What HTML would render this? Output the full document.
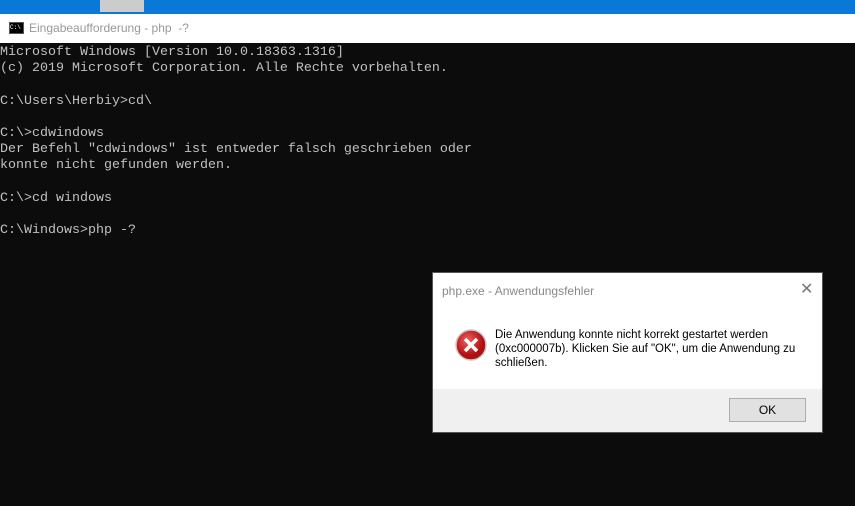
<!DOCTYPE html><html><head><style>
body{margin:0;width:855px;height:506px;overflow:hidden;background:#0c0c0c;position:relative;font-family:"Liberation Sans",sans-serif}
#top{position:absolute;left:0;top:0;width:855px;height:14px;background:#0a78d7}
#tb{position:absolute;left:0;top:14px;width:855px;height:29px;background:#fff}
#tb .t{position:absolute;left:29px;top:7px;font-size:12px;color:#999}
#ico{position:absolute;left:9px;top:22px;width:13px;height:10px;background:#000;border:1px solid #555;color:#fff;font-size:6px;line-height:10px;font-family:"Liberation Mono",monospace}
pre{position:absolute;left:0;top:45px;margin:0;font-family:"Liberation Mono",monospace;font-size:13.33px;line-height:16.2px;color:#c0c0c0}
#dlg{position:absolute;left:432px;top:272px;width:389px;height:159px;background:#fff;border:1px solid #555}
#dlg .tt{position:absolute;left:9px;top:11px;font-size:12px;color:#888}
#dlg .x{position:absolute;left:367px;top:6px;font-size:16px;color:#777}
#dlg .msg{position:absolute;left:62px;top:55px;font-size:11.5px;line-height:14px;color:#000;width:320px}
#dlg .bot{position:absolute;left:0;top:116px;width:389px;height:43px;background:#f0f0f0}
#dlg .ok{position:absolute;left:296px;top:9px;width:75px;height:22px;border:1px solid #adadad;background:#e1e1e1;font-size:12px;text-align:center;line-height:22px}
</style></head><body>
<div id="top"><div style="position:absolute;left:100px;top:0;width:44px;height:12px;background:#ccc"></div></div>
<div id="tb"><span class="t">Eingabeaufforderung - php&nbsp; -?</span></div>
<div id="ico">C:\</div>
<pre>Microsoft Windows [Version 10.0.18363.1316]
(c) 2019 Microsoft Corporation. Alle Rechte vorbehalten.

C:\Users\Herbiy>cd\

C:\>cdwindows
Der Befehl "cdwindows" ist entweder falsch geschrieben oder
konnte nicht gefunden werden.

C:\>cd windows

C:\Windows>php -?</pre>
<div id="dlg"><span class="tt">php.exe - Anwendungsfehler</span><span class="x">✕</span>
<svg style="position:absolute;left:22px;top:56px" width="32" height="32" viewBox="0 0 32 32"><defs><radialGradient id="g" cx="40%" cy="35%"><stop offset="0" stop-color="#f06060"/><stop offset="1" stop-color="#b01010"/></radialGradient></defs><circle cx="16" cy="16" r="15" fill="url(#g)" stroke="#c9c9c9" stroke-width="1.5"/><path d="M10 10L22 22M22 10L10 22" stroke="#fff" stroke-width="3.5"/></svg>
<div class="msg">Die Anwendung konnte nicht korrekt gestartet werden (0xc000007b). Klicken Sie auf "OK", um die Anwendung zu schließen.</div>
<div class="bot"><div class="ok">OK</div></div></div>
</body></html>
